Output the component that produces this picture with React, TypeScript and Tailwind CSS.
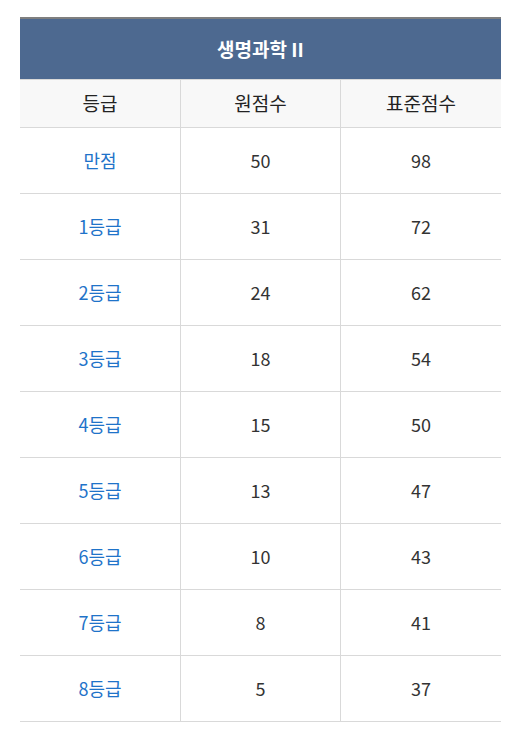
const ROWS: [string, string, string][] = [
  ["만점", "50", "98"],
  ["1등급", "31", "72"],
  ["2등급", "24", "62"],
  ["3등급", "18", "54"],
  ["4등급", "15", "50"],
  ["5등급", "13", "47"],
  ["6등급", "10", "43"],
  ["7등급", "8", "41"],
  ["8등급", "5", "37"],
];

export default function App() {
  return (
    <div
      className="min-h-screen bg-white pl-5 pr-[10px] pt-[17px]"
      style={{ fontFamily: '"Noto Sans CJK KR", "Open Sans", sans-serif' }}
    >
      <div className="border-t-2 border-[#7f7f7f]">
        <div className="flex h-[60px] items-center justify-center bg-[#4d6990] text-[19px] font-bold text-white">
          생명과학 II
        </div>
        <div className="grid h-[49px] grid-cols-[160px_160px_1fr] border-y border-[#d9d9d9] bg-[#f8f8f8] text-[19px] text-[#222]">
          <div className="flex items-center justify-center">등급</div>
          <div className="flex items-center justify-center border-l border-[#d9d9d9]">
            원점수
          </div>
          <div className="flex items-center justify-center border-l border-[#d9d9d9]">
            표준점수
          </div>
        </div>
        {ROWS.map(([grade, raw, std]) => (
          <div
            key={grade}
            className="grid h-[66px] grid-cols-[160px_160px_1fr] border-b border-[#d9d9d9] text-[18px]"
          >
            <div className="flex items-center justify-center text-[#1f73c9]">
              {grade}
            </div>
            <div className="flex items-center justify-center border-l border-[#d9d9d9] text-[#333]">
              {raw}
            </div>
            <div className="flex items-center justify-center border-l border-[#d9d9d9] text-[#333]">
              {std}
            </div>
          </div>
        ))}
      </div>
    </div>
  );
}
